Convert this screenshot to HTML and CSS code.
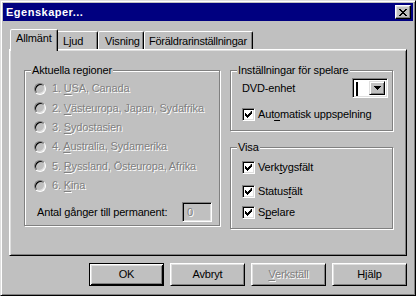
FILE: index.html
```html
<!DOCTYPE html>
<html lang="sv">
<head>
<meta charset="utf-8">
<title>Egenskaper</title>
<link rel="stylesheet" href="styles.css">
</head>
<body>
<div class="window">
  <div class="titlebar">
    <span class="title">Egenskaper...</span>
    <span class="close"><svg width="8" height="7" viewBox="0 0 8 7"><path d="M0 0h2v1h1v1h2v-1h1v-1h2v1h-1v1h-1v1h-1v1h1v1h1v1h1v1h-2v-1h-1v-1h-2v1h-1v1h-2v-1h1v-1h1v-1h1v-1h-1v-1h-1v-1h-1z" fill="#000"/></svg></span>
  </div>
  <div class="main">
    <div class="tabs">
      <div class="tab tab-allmant active">Allmänt</div>
      <div class="tab tab-ljud">Ljud</div>
      <div class="tab tab-visning">Visning</div>
      <div class="tab tab-foralder">Föräldrarinställningar</div>
    </div>
    <div class="panel">
      <div class="group group-regions">
        <span class="group-title">Aktuella regioner</span>
        <div class="radio-row"><span class="radio"></span><span class="dis">1. <u>U</u>SA, Canada</span></div>
        <div class="radio-row"><span class="radio"></span><span class="dis">2. <u>V</u>ästeuropa, Japan, Sydafrika</span></div>
        <div class="radio-row"><span class="radio"></span><span class="dis">3. <u>S</u>ydostasien</span></div>
        <div class="radio-row"><span class="radio"></span><span class="dis">4. <u>A</u>ustralia, Sydamerika</span></div>
        <div class="radio-row"><span class="radio"></span><span class="dis">5. <u>R</u>yssland, Östeuropa, Afrika</span></div>
        <div class="radio-row"><span class="radio"></span><span class="dis">6. <u>K</u>ina</span></div>
        <div class="count-row"><span>Antal gånger till permanent:</span><span class="field"><span class="dis">0</span></span></div>
      </div>
      <div class="right-col">
        <div class="group group-player">
          <span class="group-title">Inställningar för spelare</span>
          <div class="dvd-row"><span>DVD-enhet</span>
            <span class="combo"><span class="combo-text"><span class="caret"></span></span><span class="combo-btn"><svg width="7" height="4" viewBox="0 0 7 4"><path d="M0 0h7v1h-1v1h-1v1h-1v1h-1v-1h-1v-1h-1v-1h-1z" fill="#000"/></svg></span></span>
          </div>
          <div class="check-row"><span class="check"><svg width="7" height="7" viewBox="0 0 7 7"><path d="M6 0h1v3h-1v1h-1v1h-1v1h-1v1h-1v-1h-1v-1h-1v-3h1v1h1v1h1v-1h1v-1h1z" fill="#000"/></svg></span><span>Aut<u>o</u>matisk uppspelning</span></div>
        </div>
        <div class="group group-view">
          <span class="group-title">Visa</span>
          <div class="check-row row-a"><span class="check"><svg width="7" height="7" viewBox="0 0 7 7"><path d="M6 0h1v3h-1v1h-1v1h-1v1h-1v1h-1v-1h-1v-1h-1v-3h1v1h1v1h1v-1h1v-1h1z" fill="#000"/></svg></span><span>Verk<u>t</u>ygsfält</span></div>
          <div class="check-row row-b"><span class="check"><svg width="7" height="7" viewBox="0 0 7 7"><path d="M6 0h1v3h-1v1h-1v1h-1v1h-1v1h-1v-1h-1v-1h-1v-3h1v1h1v1h1v-1h1v-1h1z" fill="#000"/></svg></span><span>Status<u>f</u>ält</span></div>
          <div class="check-row row-c"><span class="check"><svg width="7" height="7" viewBox="0 0 7 7"><path d="M6 0h1v3h-1v1h-1v1h-1v1h-1v1h-1v-1h-1v-1h-1v-3h1v1h1v1h1v-1h1v-1h1z" fill="#000"/></svg></span><span>S<u>p</u>elare</span></div>
        </div>
      </div>
    </div>
    <div class="buttons">
      <span class="btn default">OK</span>
      <span class="btn">Avbryt</span>
      <span class="btn"><span class="dis"><u>V</u>erkställ</span></span>
      <span class="btn">Hjälp</span>
    </div>
  </div>
</div>
</body>
</html>
```

FILE: styles.css
```css
* { box-sizing: border-box; }
html, body { margin: 0; padding: 0; }
body {
  width: 416px; height: 296px; overflow: hidden;
  font-family: "Liberation Sans", Arial, sans-serif;
  font-size: 11px; line-height: 13px; color: #000;
  letter-spacing: -0.15px;
  background: #c0c0c0;
}
u { text-decoration-thickness: 1px; text-underline-offset: 2px; }
.dis { color: #808080; text-shadow: 1px 1px 0 #fff; }

.window {
  width: 416px; height: 296px;
  display: flex; flex-direction: column;
  padding: 2px;
  border: 1px solid; border-color: #dfdfdf #000 #000 #dfdfdf;
  box-shadow: inset 1px 1px #fff, inset -1px -1px #808080;
  background: #c0c0c0;
}
.titlebar {
  height: 18px; flex: none;
  display: flex; align-items: center; justify-content: space-between;
  padding: 0 2px 0 3px;
  background: #000080; color: #fff;
  font-weight: bold; letter-spacing: 0.5px;
}
.close {
  width: 16px; height: 14px;
  display: flex; align-items: center; justify-content: center;
  background: #c0c0c0;
  border: 1px solid; border-color: #fff #000 #000 #fff;
  box-shadow: inset -1px -1px #808080, inset 1px 1px #dfdfdf;
}
.close svg { display: block; margin-left: -1px; }

.main { flex: 1; display: flex; flex-direction: column; padding: 8px 6px 0; }

.tabs { display: flex; align-items: flex-end; height: 20px; padding-left: 3px; }
.tab {
  position: relative;
  height: 18px; padding: 1px 0 0 6px; line-height: 16px;
  white-space: nowrap;
  border: 1px solid; border-bottom: none;
  border-color: #fff #000 transparent #fff;
  border-radius: 2px 2px 0 0;
  box-shadow: inset -1px 0 #808080;
  background: #c0c0c0;
}
.tab-allmant { width: 44px; }
.tab-ljud { width: 42px; }
.tab-visning { width: 46px; }
.tab-foralder { width: 109px; padding-left: 4px; letter-spacing: -0.25px; }
.tab.active {
  z-index: 1;
  width: 48px;
  height: 22px; margin: 0 -2px -2px; padding: 0 0 4px 5px; line-height: 16px;
}
.panel {
  height: 207px; flex: none;
  display: flex; gap: 10px;
  padding: 20px 0 0 14px;
  border: 1px solid; border-color: #fff #000 #000 #fff;
  box-shadow: inset 1px 1px #dfdfdf, inset -1px -1px #808080;
}

.group {
  position: relative;
  border: 1px solid #808080;
  box-shadow: inset 1px 1px #fff, 1px 1px #fff;
}
.group-title {
  position: absolute; top: -7px; left: 6px;
  padding: 0 1px; background: #c0c0c0;
}
.group-regions { width: 196px; height: 156px; padding: 8px 0 0 9px; }
.radio-row { height: 19.4px; display: flex; align-items: center; gap: 6px; }
.radio {
  width: 12px; height: 12px; border-radius: 50%;
  border: 1px solid; border-color: #808080 #fff #fff #808080;
  box-shadow: inset 1px 1px #000, inset -1px -1px #dfdfdf;
  background: #c0c0c0;
}
.count-row {
  display: flex; align-items: center; justify-content: space-between;
  margin-top: 7px; padding: 0 7px 0 3px; height: 20px;
}
.field {
  width: 30px; height: 20px; padding: 3px 0 0 4px;
  border: 1px solid; border-color: #808080 #fff #fff #808080;
  box-shadow: inset 1px 1px #000, inset -1px -1px #dfdfdf;
}

.right-col { display: flex; flex-direction: column; gap: 16px; }
.group-player { width: 163px; height: 61px; padding: 7px 0 0 11px; }
.dvd-row { display: flex; align-items: center; justify-content: space-between; padding-right: 4px; height: 20px; }
.combo {
  width: 36px; height: 20px; display: flex;
  padding: 2px;
  border: 1px solid; border-color: #808080 #fff #fff #808080;
  box-shadow: inset 1px 1px #000, inset -1px -1px #dfdfdf;
  background: #fff;
}
.combo-text { flex: 1; padding: 1px 0 0 1px; }
.caret { display: block; width: 2px; height: 14px; background: #000; }
.combo-btn {
  width: 16px; display: flex; align-items: center; justify-content: center;
  background: #c0c0c0;
  border: 1px solid; border-color: #dfdfdf #000 #000 #dfdfdf;
  box-shadow: inset 1px 1px #fff, inset -1px -1px #808080;
}
.combo-btn svg { display: block; }

.check-row { display: flex; align-items: center; gap: 3px; height: 13px; margin-top: 10px; }
.check {
  width: 13px; height: 13px; flex: none;
  display: flex; align-items: center; justify-content: center;
  border: 1px solid; border-color: #808080 #fff #fff #808080;
  box-shadow: inset 1px 1px #000, inset -1px -1px #dfdfdf;
  background: #fff;
}
.check svg { display: block; }
.group-view { width: 163px; height: 82px; padding: 13px 0 0 11px; }
.group-view .row-a { margin-top: 0; }
.group-view .row-b { margin-top: 11px; }
.group-view .row-c { margin-top: 8px; }

.buttons { display: flex; justify-content: flex-end; gap: 6px; margin-top: 7px; }
.btn {
  width: 75px; height: 23px;
  display: flex; align-items: center; justify-content: center;
  border: 1px solid; border-color: #fff #000 #000 #fff;
  box-shadow: inset 1px 1px #dfdfdf, inset -1px -1px #808080;
}
.btn.default {
  border-color: #000;
  box-shadow: inset 1px 1px #fff, inset -1px -1px #000, inset 2px 2px #dfdfdf, inset -2px -2px #808080;
}
```
